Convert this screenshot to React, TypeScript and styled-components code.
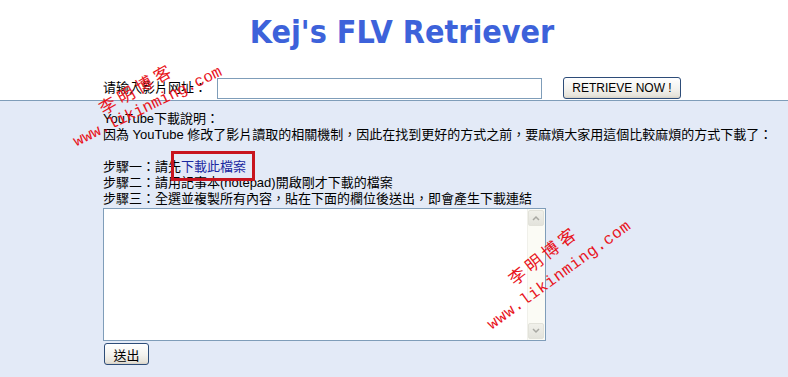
import React from 'react'
import styled, { createGlobalStyle } from 'styled-components'

const GlobalStyle = createGlobalStyle`
  html, body {
    margin: 0;
    padding: 0;
    background: #ffffff;
  }
  body {
    font-family: 'Liberation Sans', 'Noto Sans CJK TC', sans-serif;
    color: #000;
  }
`

const Page = styled.div`
  position: relative;
  width: 788px;
  height: 377px;
  overflow: hidden;
  display: flex;
  flex-direction: column;
`

const Header = styled.header`
  height: 100px;
  background: #ffffff;
  border-bottom: 1px solid #7f9db9;
  display: flex;
  flex-direction: column;
`

const Title = styled.h1`
  margin: 14px 0 0;
  padding-left: 16px;
  text-align: center;
  font-family: 'DejaVu Sans Condensed', 'DejaVu Sans', sans-serif;
  font-weight: bold;
  font-size: 32px;
  line-height: 37px;
  color: #3d62da;
`

const FormRow = styled.form`
  margin-top: 26px;
  padding-left: 103px;
  display: flex;
  align-items: center;
  height: 22px;
`

const Label = styled.label`
  font-size: 13px;
  line-height: 16px;
  width: 114px;
`

const UrlInput = styled.input`
  box-sizing: border-box;
  width: 325px;
  height: 21px;
  border: 1px solid #7f9db9;
  background: #fff;
  padding: 0 3px;
  outline: none;
`

const XpButton = styled.button<{ $w: number }>`
  box-sizing: border-box;
  width: ${p => p.$w}px;
  height: 22px;
  padding: 0;
  border: 1px solid #2d4c78;
  border-radius: 3px;
  background: linear-gradient(#ffffff 0%, #f3f2ee 55%, #e6e3da 90%, #d6d0c5 100%);
  font-family: 'Liberation Sans', 'Noto Sans CJK TC', sans-serif;
  font-size: 12px;
  color: #000;
  cursor: pointer;
`

const RetrieveButton = styled(XpButton)`
  margin-left: 21px;
`

const Panel = styled.main`
  flex: 1;
  background: #e3eaf7;
  padding: 10px 0 0 103px;
  font-size: 13px;
  line-height: 16px;
`

const Line = styled.div`
  white-space: nowrap;
  height: 16px;
`

const Blank = styled.div`
  height: 16px;
`

const DownloadLink = styled.a`
  color: #1a28a0;
  text-decoration: none;
`

const TextBox = styled.div`
  box-sizing: border-box;
  margin-top: 1px;
  width: 443px;
  height: 133px;
  border: 1px solid #7f9db9;
  background: #fff;
  display: flex;
`

const Area = styled.textarea`
  flex: 1;
  border: none;
  resize: none;
  outline: none;
  padding: 2px;
  font-size: 13px;
`

const Scrollbar = styled.div`
  width: 17px;
  background: #fbfbf5;
  border-left: 1px solid #f0f0ea;
  display: flex;
  flex-direction: column;
  justify-content: space-between;
  padding: 1px 0;
`

const ArrowButton = styled.div`
  box-sizing: border-box;
  width: 16px;
  height: 16px;
  border: 1px solid #e2e2da;
  border-radius: 2px;
  background: linear-gradient(#f0f0ea, #e3e3dc);
  display: flex;
  align-items: center;
  justify-content: center;
`

const SubmitButton = styled(XpButton)`
  margin-top: 2px;
  font-size: 13px;
  display: block;
  margin-left: 1px;
`

const Mark = styled.span<{ $x: number; $y: number; $angle: number; $size: number; $mono?: boolean; $gap?: number }>`
  position: absolute;
  left: ${p => p.$x}px;
  top: ${p => p.$y - p.$size}px;
  transform-origin: 0 100%;
  transform: rotate(${p => -p.$angle}deg);
  color: #e8141c;
  font-family: ${p => (p.$mono ? "'Liberation Mono', monospace" : "'Noto Sans CJK SC', sans-serif")};
  font-size: ${p => p.$size}px;
  letter-spacing: ${p => p.$gap ?? 0}px;
  line-height: 1;
  white-space: nowrap;
  pointer-events: none;
`

const Highlight = styled.div`
  position: absolute;
  left: 171px;
  top: 151px;
  width: 84px;
  height: 30px;
  box-sizing: border-box;
  border: 3px solid #c8141e;
  pointer-events: none;
`

function Chevron({ up }: { up?: boolean }) {
  return (
    <svg width="8" height="6" viewBox="0 0 8 6">
      <path d={up ? 'M1 5 L4 2 L7 5' : 'M1 1 L4 4 L7 1'} fill="none" stroke="#a8a8a2" strokeWidth="1.5" />
    </svg>
  )
}

export default function App() {
  return (
    <Page>
      <GlobalStyle />
      <Header>
        <Title>Kej's FLV Retriever</Title>
        <FormRow onSubmit={e => e.preventDefault()}>
          <Label>请输入影片网址：</Label>
          <UrlInput type="text" />
          <RetrieveButton $w={118} type="submit">RETRIEVE NOW !</RetrieveButton>
        </FormRow>
      </Header>
      <Panel>
        <Line>YouTube下載說明：</Line>
        <Line>因為 YouTube 修改了影片讀取的相關機制，因此在找到更好的方式之前，要麻煩大家用這個比較麻煩的方式下載了：</Line>
        <Blank />
        <Line>
          步驟一：請先<DownloadLink href="#">下載此檔案</DownloadLink>
        </Line>
        <Line>步驟二：請用記事本(notepad)開啟剛才下載的檔案</Line>
        <Line>步驟三：全選並複製所有內容，貼在下面的欄位後送出，即會產生下載連結</Line>
        <TextBox>
          <Area />
          <Scrollbar>
            <ArrowButton>
              <Chevron up />
            </ArrowButton>
            <ArrowButton>
              <Chevron />
            </ArrowButton>
          </Scrollbar>
        </TextBox>
        <SubmitButton $w={45} type="button">送出</SubmitButton>
      </Panel>
      <Highlight />
      <Mark $x={104} $y={116} $angle={30} $size={17} $gap={4}>李明博客</Mark>
      <Mark $x={78} $y={150} $angle={26} $size={16} $mono>www.likinming.com</Mark>
      <Mark $x={515} $y={287} $angle={38} $size={17} $gap={4}>李明博客</Mark>
      <Mark $x={494} $y={333} $angle={36} $size={16} $gap={0.6} $mono>www.likinming.com</Mark>
    </Page>
  )
}
